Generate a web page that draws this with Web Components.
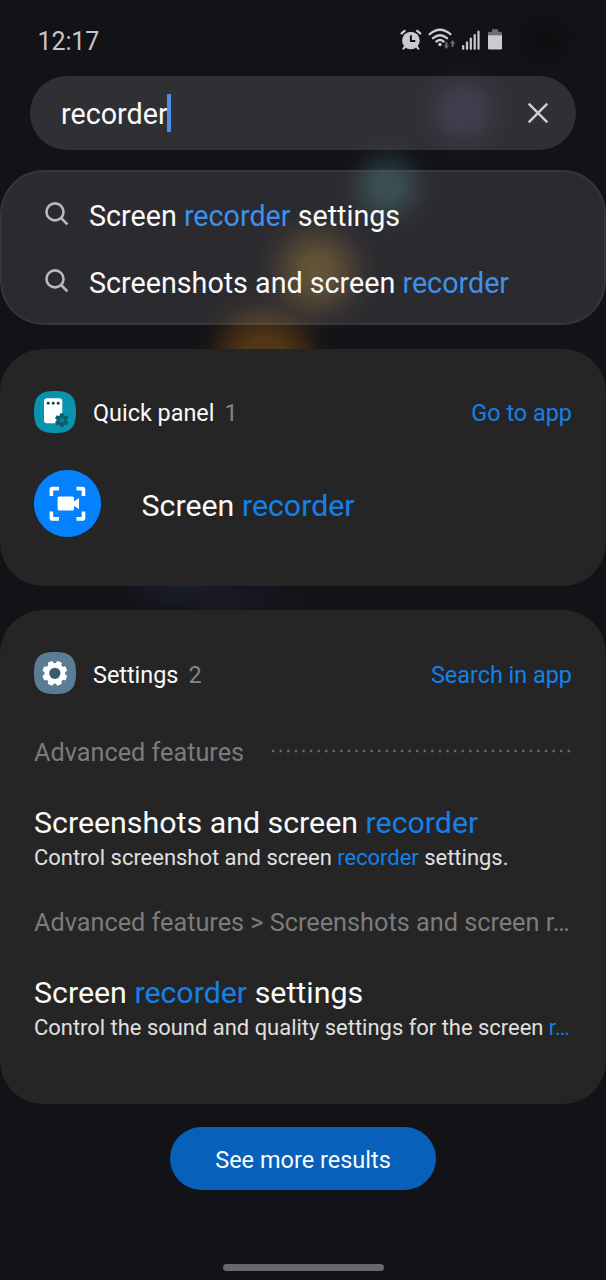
<!DOCTYPE html>
<html lang="en">
<head>
<meta charset="utf-8">
<title>Search</title>
<style>
html,body{margin:0;height:100%;background:#131217}
body{font-family:Roboto,"Noto Sans",sans-serif;color:#fafafa;overflow:hidden}
</style>
</head>
<body>
<finder-screen></finder-screen>
<script>
const define = (name, html) => {
  const t = document.createElement('template');
  t.innerHTML = html;
  customElements.define(name, class extends HTMLElement {
    constructor() {
      super();
      this.attachShadow({ mode: 'open' }).append(t.content.cloneNode(true));
    }
  });
};

const teeth = (angles, x, y, w, h, r) => angles.map(a => `<rect x="${x}" y="${y}" width="${w}" height="${h}" rx="${r}" transform="rotate(${a})"/>`).join('');

const ICONS = {
  alarm: ['0 0 22 22', 22, 22, `<g fill="none" stroke="#cbcbce" stroke-width="2.2" stroke-linecap="round"><path d="M1.6 4.4 4.6 1.9M20.2 4.4 17.2 1.900" stroke-width="2.3"/><path d="M5.200 17.500 3.500 19.700M16.600 17.500l1.700 2.200"/></g><circle cx="10.900" cy="11.500" r="8.800" fill="#cbcbce"/><path d="M10.900 6.200v5.800h4.400" fill="none" stroke="#131217" stroke-width="2"/>`],
  wifi: ['0 0 28 22', 28, 22, `<g fill="none" stroke="#cbcbce" stroke-width="2.300" stroke-linecap="round"><path d="M1.700 6.200Q12 -2.600 22.400 6.200"/><path d="M5 10.200q7-6 14 0"/><path d="M8.400 13.500q3.600-2.900 7.200 0"/></g><circle cx="12" cy="16.500" r="1.700" fill="#cbcbce"/><path d="M17.300 14h2.200v3.600h1.600l-2.700 3.500-2.700-3.500h1.600zM23.500 18.700h2.200v-3.100h1.600l-2.700-3.500-2.700 3.500h1.600z" fill="#68686c"/>`],
  signal: ['0 0 18 20', 18, 20, `<path d="M1.200 18.800v-2.800M5 18.800v-6.500M8.800 18.800V8.500M12.700 18.800V5M16.500 18.800V1.500" stroke="#cbcbce" stroke-width="2.200" stroke-linecap="round"/>`],
  battery: ['0 0 14 21', 14, 21, `<path d="M4 .2h6v2.600h2.500q1.500 0 1.500 1.500v2.200H0V4.300q0-1.500 1.500-1.500H4z" fill="#6e6e72"/><path d="M0 6.200h14v13q0 1.300-1.300 1.300H1.300Q0 20.500 0 19.200z" fill="#cbcbce"/>`],
  close: ['0 0 22 22', 22, 22, `<path d="m1.700 1.700 18.600 18.600M20.300 1.700 1.700 20.300" stroke="#cfcfd2" stroke-width="2.500"/>`],
  search: ['0 0 24 24', 24, 24, `<circle cx="10" cy="9.900" r="8.500" fill="none" stroke="#b9b9bc" stroke-width="2.600"/><path d="m15.800 15.800 6.600 6.600" stroke="#b9b9bc" stroke-width="2.700"/>`],
  panel: ['0 0 42 42', 42, 42, `<path d="M21 0C36.500 0 42 5.500 42 21S36.500 42 21 42 0 36.500 0 21 5.500 0 21 0z" fill="#0893ae"/><rect x="10" y="7.300" width="18.300" height="25" rx="3.200" fill="#fff"/><g fill="#17434e"><circle cx="14.200" cy="12.200" r="1.450"/><circle cx="19.200" cy="12.200" r="1.450"/><circle cx="24.200" cy="12.200" r="1.450"/></g><g transform="translate(27.800 29.200)" fill="#08616f">${teeth([0,60,120],-2,-6.9,4,13.8,1)}<circle r="5.200"/><circle r="2.200" fill="#0d8196"/></g>`],
  settings: ['0 0 42 42', 42, 42, `<path d="M21 0C36.500 0 42 5.500 42 21S36.500 42 21 42 0 36.500 0 21 5.500 0 21 0z" fill="#5a7d96"/><g transform="translate(20.800 21.300)" fill="#fff">${teeth([22.5,67.5,112.5,157.5],-2.8,-12.5,5.6,25,1.3)}<circle r="10.400"/><circle r="5.600" fill="#3a5b6b"/></g>`],
  recorder: ['0 0 68 68', 68, 68, `<circle cx="33.500" cy="33.500" r="33.600" fill="#0381fe"/><path d="M17.400 26v-6.400q0-1 1-1H25M42.500 18.600h6q1 0 1 1V26M49.500 41.500v6.400q0 1-1 1h-6M25 48.900h-6.600q-1 0-1-1v-6.400" fill="none" stroke="#fff" stroke-width="3.600"/><rect x="23.600" y="26.600" width="16.400" height="14" rx="1.700" fill="#fff"/><path d="m39 32 6-4.100v11.400l-6-4.100z" fill="#fff"/>`]
};
customElements.define('ui-icon', class extends HTMLElement {
  constructor() { super(); this.attachShadow({ mode: 'open' }); }
  connectedCallback() {
    const [box, w, h, body] = ICONS[this.getAttribute('name')];
    this.shadowRoot.innerHTML = `<style>:host{display:block;flex:none;width:${w}px;height:${h}px}svg{display:block}</style><svg viewBox="${box}" width="${w}" height="${h}">${body}</svg>`;
  }
});

define('status-bar', `<style>
:host{display:flex;height:76px;box-sizing:border-box;padding:28px 104px 0 37.500px;justify-content:space-between;align-items:flex-start;color:#c6c6c9}
.time{font-size:25px;line-height:28px;letter-spacing:-.1px}
.icons{display:flex;align-items:flex-start;padding-top:1px}
</style><span class="time">12:17</span>
<div class="icons"><ui-icon name="alarm" style="margin-left:-.5px"></ui-icon><ui-icon name="wifi" style="margin:-1px 0 0 6.500px"></ui-icon><ui-icon name="signal" style="margin:1px 0 0 5.500px"></ui-icon><ui-icon name="battery" style="margin:0 0 0 8.500px"></ui-icon></div>`);

define('search-field', `<style>
:host{display:flex;align-items:center;box-sizing:border-box;height:74px;margin:0 30px;padding:0 27px 0 31px;border-radius:37px;background:rgba(255,255,255,.125)}
.q{font-size:28.700px;line-height:36px;padding-top:1px}
.caret{width:4px;height:38px;background:#4c8de8;margin-left:-1px}
.gap{flex:1}
</style><span class="q"><slot></slot></span><i class="caret"></i><i class="gap"></i><ui-icon name="close"></ui-icon>`);

define('suggestion-list', `<style>
:host{display:flex;flex-direction:column;box-sizing:border-box;height:155px;margin-top:20px;padding-top:10px;border:2px solid rgba(255,255,255,.15);border-radius:44px;background:rgba(255,255,255,.105) padding-box}
</style><slot></slot>`);
define('suggestion-row', `<style>
:host{display:flex;align-items:center;height:67px;padding-left:43px;font-size:28.700px;white-space:nowrap}
ui-icon{margin:-4px 20px 0 0}
span{margin-top:1px}
::slotted(em){font-style:normal;color:#3e91ea}
</style><ui-icon name="search"></ui-icon><span><slot></slot></span>`);

define('result-card', `<style>
:host{display:block;box-sizing:border-box;margin-top:24px;padding:42px 34px 0;border-radius:43px;background:#252525}
header{display:flex;align-items:center;height:42px;font-size:23.400px;line-height:28px;white-space:nowrap}
header span{padding-top:var(--label-shift,1px)}
.name{margin-left:17px}
.count{margin-left:10px;color:#858585}
.action{margin-left:auto;color:#1381ec}
</style><header><slot name="icon"></slot><span class="name"><slot name="name"></slot></span><span class="count"><slot name="count"></slot></span><span class="action"><slot name="action"></slot></span></header><slot></slot>`);

define('app-result', `<style>
:host{display:flex;align-items:center;height:68px;margin-top:37px;font-size:30.350px;white-space:nowrap}
span{margin:3px 0 0 39.500px}
::slotted(em){font-style:normal;color:#1381ec}
</style><ui-icon name="recorder"></ui-icon><span><slot></slot></span>`);

define('path-label', `<style>
:host{display:flex;align-items:center;height:34px;font-size:25.250px;line-height:34px;color:#7c7c7c;white-space:nowrap}
svg{display:none;margin:-4px 1px 0 auto}
:host([dotted]) svg{display:block}
</style><span><slot></slot></span><svg width="300" height="4"><path d="M1 2H300" stroke="#686868" stroke-width="2.300" stroke-dasharray="2.400 5.180"/></svg>`);

define('setting-result', `<style>
:host{display:block;white-space:nowrap}
.t{font-size:30.350px;line-height:38px;height:39px}
.d{font-size:21.950px;line-height:30px;height:29px;color:#e0e0e0}
::slotted(em){font-style:normal;color:#1381ec}
</style><div class="t"><slot name="title"></slot></div><div class="d"><slot></slot></div>`);
define('mark-text', `<style>:host{display:inline}::slotted(em){font-style:normal;color:#1381ec}</style><slot></slot>`);

define('more-button', `<style>
:host{display:block;text-align:center;margin-top:23px;height:63px}
button{font:400 23.500px/30px Roboto,sans-serif;color:#fafafa;background:#0761ba;border:0;border-radius:32px;width:266px;height:62.500px;padding:3px 0 0;margin:0}
</style><button><slot></slot></button>`);
define('home-handle', `<style>:host{display:block;width:161px;height:7px;border-radius:4px;background:#68676d;margin:74px auto 0}</style>`);

define('finder-screen', `<style>
:host{display:block;width:606px;height:1280px;overflow:hidden;background:
radial-gradient(circle 34px at 546px 40px,#0f0e11 25%,transparent 100%),
radial-gradient(circle 52px at 463px 111px,rgba(40,39,60,.9) 0,rgba(40,39,60,.78) 25%,rgba(40,39,60,.46) 50%,rgba(40,39,60,.14) 75%,transparent 100%),
radial-gradient(circle 52px at 387px 186px,rgba(38,64,67,.95) 0,rgba(38,64,67,.83) 25%,rgba(38,64,67,.48) 50%,rgba(38,64,67,.12) 75%,transparent 100%),
radial-gradient(circle 64px at 317px 271px,rgba(89,69,33,.93) 0,rgba(89,69,33,.82) 25%,rgba(89,69,33,.48) 50%,rgba(89,69,33,.13) 75%,transparent 100%),
radial-gradient(circle 74px at 264px 360px,rgba(86,56,22,1) 0,rgba(86,56,22,.93) 30%,rgba(86,56,22,.55) 55%,rgba(86,56,22,.13) 78%,transparent 100%),
radial-gradient(ellipse 60px 22px at 180px 585px,rgba(25,32,50,.8) 0,transparent 100%),
radial-gradient(ellipse 100px 30px at 220px 600px,#1a1925 0,transparent 100%),
#131217}
</style>
<status-bar></status-bar>
<search-field>recorder</search-field>
<suggestion-list>
<suggestion-row>Screen <em>recorder</em> settings</suggestion-row>
<suggestion-row>Screenshots and screen <em>recorder</em></suggestion-row>
</suggestion-list>
<result-card style="height:237px">
<ui-icon slot="icon" name="panel"></ui-icon><span slot="name">Quick panel</span><span slot="count">1</span><span slot="action">Go to app</span>
<app-result>Screen <em>recorder</em></app-result>
</result-card>
<result-card style="height:494px;--label-shift:3px">
<ui-icon slot="icon" name="settings"></ui-icon><span slot="name">Settings</span><span slot="count">2</span><span slot="action">Search in app</span>
<path-label dotted style="margin-top:42px">Advanced features</path-label>
<setting-result style="margin-top:34px"><mark-text slot="title">Screenshots and screen <em>recorder</em></mark-text>Control screenshot and screen <em>recorder</em> settings.</setting-result>
<path-label style="margin-top:34px">Advanced features &gt; Screenshots and screen r…</path-label>
<setting-result style="margin-top:34px"><mark-text slot="title">Screen <em>recorder</em> settings</mark-text>Control the sound and quality settings for the screen <em>r…</em></setting-result>
</result-card>
<more-button>See more results</more-button>
<home-handle></home-handle>`);
</script>
</body>
</html>
